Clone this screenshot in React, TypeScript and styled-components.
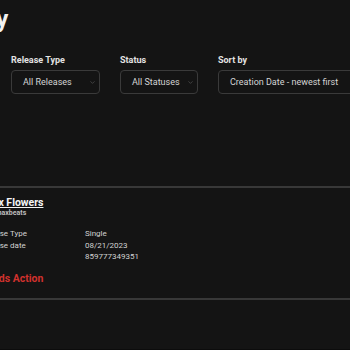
import React from 'react';
import styled, { createGlobalStyle } from 'styled-components';
import { ChevronDown } from 'lucide-react';

const Global = createGlobalStyle`
  html, body {
    margin: 0;
    padding: 0;
    background: #141414;
    overflow: hidden;
  }
  body {
    font-family: Roboto, "Liberation Sans", Arial, sans-serif;
    color: #e6e6e6;
  }
`;

const Page = styled.div`
  width: 350px;
  height: 350px;
  overflow: hidden;
  background: #141414;
  display: flex;
  flex-direction: column;
  border-bottom: 1px solid #0c0c0c;
  box-sizing: border-box;
`;

const Title = styled.h1`
  margin: 5px 0 0 -126px;
  font-size: 24px;
  font-weight: 700;
  line-height: 28px;
  color: #f2f2f2;
  white-space: nowrap;
`;

const Filters = styled.div`
  display: flex;
  gap: 20px;
  padding-left: 11px;
  margin-top: 22px;
`;

const Field = styled.div`
  display: flex;
  flex-direction: column;
  gap: 4px;
  flex-shrink: 0;
`;

const Label = styled.label`
  font-size: 9px;
  font-weight: 700;
  color: #e2e2e2;
  line-height: 11px;
`;

const Select = styled.div<{ $w: number }>`
  width: ${(p) => p.$w}px;
  height: 24px;
  box-sizing: border-box;
  border: 1px solid #3a3a3a;
  border-radius: 4px;
  display: flex;
  align-items: center;
  justify-content: space-between;
  padding: 0 3px 0 11px;
  font-size: 9px;
  color: #d4d4d4;
  white-space: nowrap;
  svg {
    color: #7a7a7a;
    flex-shrink: 0;
  }
`;

const List = styled.div`
  margin-top: 92px;
  margin-left: -20px;
  border-top: 2px solid #383838;
`;

const Card = styled.div`
  padding: 9px 0 13px;
  border-bottom: 2px solid #383838;
`;

const ReleaseTitle = styled.a`
  display: block;
  width: fit-content;
  font-size: 10.5px;
  font-weight: 700;
  color: #f4f4f4;
  text-decoration: underline;
  line-height: 12px;
`;

const Artist = styled.div`
  font-size: 7px;
  font-weight: 700;
  color: #bdbdbd;
  line-height: 8px;
`;

const Details = styled.div`
  display: grid;
  grid-template-columns: 105px auto;
  margin-top: 11px;
  font-size: 8px;
  line-height: 11.5px;
  color: #d2d2d2;
`;

const Status = styled.div`
  margin-top: 9.5px;
  font-size: 10.5px;
  font-weight: 700;
  color: #d0312d;
  line-height: 13px;
`;

const filters = [
  { label: 'Release Type', value: 'All Releases', w: 89 },
  { label: 'Status', value: 'All Statuses', w: 78 },
  { label: 'Sort by', value: 'Creation Date - newest first', w: 150 },
];

export default function App() {
  return (
    <>
      <Global />
      <Page>
        <Title>Discography</Title>
        <Filters>
          {filters.map((f) => (
            <Field key={f.label}>
              <Label>{f.label}</Label>
              <Select $w={f.w}>
                <span>{f.value}</span>
                <ChevronDown size={7} strokeWidth={1.5} />
              </Select>
            </Field>
          ))}
        </Filters>
        <List>
          <Card>
            <ReleaseTitle>Onyx Flowers</ReleaseTitle>
            <Artist>by @maxbeats</Artist>
            <Details>
              <span>Release Type</span>
              <span>Single</span>
              <span>Release date</span>
              <span>08/21/2023</span>
              <span>UPC</span>
              <span>859777349351</span>
            </Details>
            <Status>Needs Action</Status>
          </Card>
        </List>
      </Page>
    </>
  );
}
